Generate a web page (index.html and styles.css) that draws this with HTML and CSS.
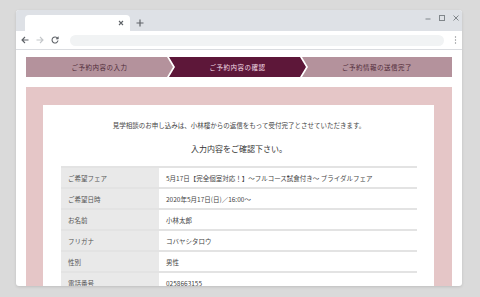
FILE: index.html
```html
<!DOCTYPE html>
<html lang="ja">
<head>
    <meta charset="UTF-8">
    <title>ご予約内容の確認</title>
    <link rel="stylesheet" href="styles.css">
</head>
<body>
    <div class="window">
        <div class="tabbar">
            <div class="tab">
                <svg class="tab-close" width="6" height="6" viewBox="0 0 6 6"><path d="M1 1L5 5M5 1L1 5" stroke="#5f6368" stroke-width="1.1"/></svg>
            </div>
            <svg class="tab-new" width="8" height="8" viewBox="0 0 8 8"><path d="M4 0.5V7.5M0.5 4H7.5" stroke="#5f6368" stroke-width="1.2"/></svg>
            <div class="controls">
                <svg width="6" height="6" viewBox="0 0 6 6"><path d="M0.5 4H5.5" stroke="#80868b" stroke-width="1"/></svg>
                <svg width="6" height="6" viewBox="0 0 6 6"><rect x="0.5" y="0.5" width="5" height="5" fill="none" stroke="#80868b" stroke-width="1"/></svg>
                <svg width="6" height="6" viewBox="0 0 6 6"><path d="M0.5 0.5L5.5 5.5M5.5 0.5L0.5 5.5" stroke="#80868b" stroke-width="1"/></svg>
            </div>
        </div>
        <div class="toolbar">
            <svg width="8" height="8" viewBox="0 0 8 8"><path d="M7.5 4H1M4 1L1 4L4 7" fill="none" stroke="#5f6368" stroke-width="1.1"/></svg>
            <svg width="8" height="8" viewBox="0 0 8 8"><path d="M0.5 4H7M4 1L7 4L4 7" fill="none" stroke="#c4c7ca" stroke-width="1.1"/></svg>
            <svg width="8" height="8" viewBox="0 0 8 8"><path d="M6.6 2.4A3 3 0 1 0 7 4.5" fill="none" stroke="#5f6368" stroke-width="1.1"/><path d="M7.3 0.6V3H4.9" fill="#5f6368" stroke="#5f6368" stroke-width="0.6"/></svg>
            <div class="address"></div>
            <svg width="3" height="8" viewBox="0 0 3 8"><circle cx="1.5" cy="1" r="0.7" fill="#8a8d90"/><circle cx="1.5" cy="4" r="0.7" fill="#8a8d90"/><circle cx="1.5" cy="7" r="0.7" fill="#8a8d90"/></svg>
        </div>
        <div class="page">
            <ol class="steps">
                <li class="step step-first">ご予約内容の入力</li>
                <li class="step step-current">ご予約内容の確認</li>
                <li class="step step-last">ご予約情報の送信完了</li>
            </ol>
            <div class="confirm">
                <div class="card">
                    <p class="lead">見学相談のお申し込みは、小林樓からの返信をもって受付完了とさせていただきます。</p>
                    <h2 class="title">入力内容をご確認下さい。</h2>
                    <table class="details">
                        <tr><th>ご希望フェア</th><td>5月17日【完全個室対応！】～フルコース試食付き～ ブライダルフェア</td></tr>
                        <tr><th>ご希望日時</th><td>2020年5月17日(日)／16:00～</td></tr>
                        <tr><th>お名前</th><td>小林太郎</td></tr>
                        <tr><th>フリガナ</th><td>コバヤシタロウ</td></tr>
                        <tr><th>性別</th><td>男性</td></tr>
                        <tr><th>電話番号</th><td>0258663155</td></tr>
                    </table>
                </div>
            </div>
        </div>
    </div>
</body>
</html>
```

FILE: styles.css
```css
html, body {
    margin: 0;
    height: 100%;
    overflow: hidden;
}

body {
    background: #dadada;
    font-family: "Noto Sans CJK JP", "Noto Sans", sans-serif;
    color: #333;
    padding: 10px 18px 0 16px;
    box-sizing: border-box;
}

.window {
    width: 446px;
    height: 276px;
    background: #fff;
    border-radius: 3px;
    overflow: hidden;
    box-shadow: 0 1px 3px rgba(0, 0, 0, 0.12);
    display: flex;
    flex-direction: column;
}

.tabbar {
    height: 21px;
    background: #dee1e6;
    display: flex;
    align-items: flex-end;
    padding-left: 9px;
    flex-shrink: 0;
}

.tab {
    width: 105px;
    height: 16px;
    background: #fff;
    border-radius: 4px 4px 0 0;
    display: flex;
    align-items: center;
    justify-content: flex-end;
    padding-right: 6px;
    box-sizing: border-box;
}

.tab-new {
    margin: 0 0 4px 6px;
}

.controls {
    margin-left: auto;
    align-self: flex-start;
    display: flex;
    gap: 8px;
    padding: 5px 3px 0 0;
}

.toolbar {
    height: 18px;
    display: flex;
    align-items: center;
    gap: 7px;
    padding: 0 5px 0 5px;
    border-bottom: 1px solid #dadce0;
    flex-shrink: 0;
}

.address {
    flex: 1;
    height: 11px;
    background: #f1f3f4;
    border-radius: 6px;
    margin: 0 3px 0 4px;
}

.page {
    padding: 7px 10px 0;
}

.steps {
    list-style: none;
    margin: 0;
    padding: 0;
    display: flex;
    height: 20px;
}

.step {
    display: flex;
    align-items: center;
    justify-content: center;
    font-size: 6.5px;
    letter-spacing: 0.5px;
    background: #b4929c;
    color: #4f2a38;
}

.step-first {
    flex: 0 0 147px;
    clip-path: polygon(0 0, calc(100% - 6px) 0, 100% 50%, calc(100% - 6px) 100%, 0 100%);
}

.step-current {
    flex: 0 0 137px;
    background: #5d1739;
    color: #f3dde6;
    margin-left: -4px;
    clip-path: polygon(0 0, calc(100% - 6px) 0, 100% 50%, calc(100% - 6px) 100%, 0 100%, 6px 50%);
}

.step-last {
    flex: 1;
    margin-left: -4px;
    clip-path: polygon(0 0, 100% 0, 100% 100%, 0 100%, 6px 50%);
}

.confirm {
    margin-top: 10px;
    background: #e5c6c7;
    padding: 18px 18px 0 17px;
    height: 300px;
}

.card {
    background: #fff;
    padding: 15px 17px 0 18px;
    height: 100%;
}

.lead {
    margin: 0;
    text-align: center;
    font-size: 6.5px;
    line-height: 10px;
    color: #444;
}

.title {
    margin: 13px 0 0;
    text-align: center;
    font-size: 8px;
    font-weight: normal;
    line-height: 12px;
    color: #333;
}

.details {
    margin-top: 11px;
    width: 100%;
    border-collapse: collapse;
    border-top: 2px solid #e3e3e3;
}

.details th,
.details td {
    height: 19px;
    padding: 0 0 0 7px;
    border-bottom: 2px solid #e3e3e3;
    text-align: left;
    font-size: 6.5px;
    font-weight: normal;
    white-space: nowrap;
}

.details th {
    width: 91px;
    background: #e9e9e9;
    color: #555;
}

.details td {
    color: #444;
}
```
